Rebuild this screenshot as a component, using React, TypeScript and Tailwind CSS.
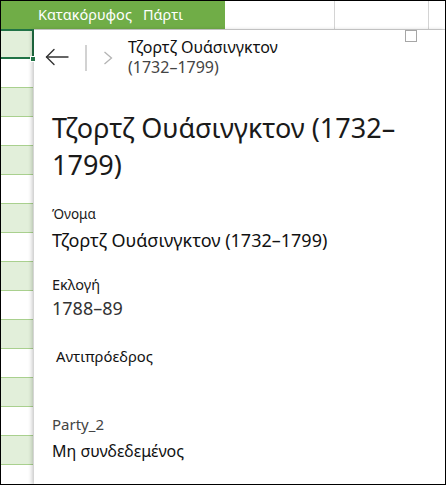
import { useState } from "react";

const FONT = { fontFamily: '"Segoe UI", "Noto Sans", "Open Sans", sans-serif' };

const ROWS = Array.from({ length: 16 }, (_, i) => i);

function BackArrow() {
  return (
    <svg width="24" height="18" viewBox="0 0 24 18" fill="none" stroke="#333" strokeWidth="1.4" strokeLinecap="round">
      <path d="M1.5 9 H23" />
      <path d="M9 1.5 L1.5 9 L9 16.5" strokeLinejoin="round" />
    </svg>
  );
}

function Chevron() {
  return (
    <svg width="10" height="14" viewBox="0 0 10 14" fill="none" stroke="#b4b4b4" strokeWidth="1.3">
      <path d="M1.5 1 L8.5 7 L1.5 13" />
    </svg>
  );
}

function Field({ label, value }: { label: string; value: string }) {
  return (
    <div>
      <div className="text-[13.5px] leading-[18px] text-[#1a1a1a]">{label}</div>
      <div className="mt-[6px] text-[18px] leading-[22px] text-[#111]">{value}</div>
    </div>
  );
}

export default function App() {
  const [checked, setChecked] = useState(false);

  return (
    <div className="relative h-[485px] w-[446px] overflow-hidden border border-black bg-white" style={FONT}>
      {/* sheet header */}
      <div className="flex h-[29px] border-b border-[#d4d4d4]">
        <div className="flex w-[224px] items-center bg-[#70ad47] pl-[37px] text-[14.5px] text-white">
          <span>Κατακόρυφος</span>
          <span className="ml-[11px]">Πάρτι</span>
        </div>
        <div className="w-[110px] border-r border-[#d4d4d4]" />
        <div className="w-[94px] border-r border-[#d4d4d4]" />
        <div className="flex-1" />
      </div>

      <div className="flex h-[455px]">
        {/* banded column */}
        <div className="relative w-[32px] shrink-0">
          {ROWS.map((i) => (
            <div
              key={i}
              className={`h-[29px] border-b border-[#a9d08e] ${i % 2 === 0 ? "bg-[#e2efda]" : "bg-white"}`}
            />
          ))}
          <div className="absolute -top-px left-0 h-[30px] w-[33px] border-2 border-l-0 border-[#217346]" />
        </div>

        {/* card panel */}
        <div className="relative ml-px flex-1 bg-white shadow-[-2px_0_4px_rgba(0,0,0,0.22)]">
          <button
            onClick={() => setChecked(!checked)}
            className="absolute right-[28px] top-0 h-[12px] w-[12px] border border-[#a6a6a6] bg-white"
          />

          <div className="flex items-start pl-[11px] pt-[7px]">
            <div className="flex h-[40px] w-[24px] items-center">
              <BackArrow />
            </div>
            <div className="ml-[16px] mt-[8px] h-[26px] w-[2px] bg-[#d2d2d2]" />
            <div className="ml-[16px] mt-[14px]">
              <Chevron />
            </div>
            <div className="ml-[15px] text-[16px] leading-[20px]">
              <div className="text-[#111]">Τζορτζ Ουάσινγκτον</div>
              <div className="text-[#444]">(1732–1799)</div>
            </div>
          </div>

          <div className="pl-[18px] pr-[20px]">
            <h1 className="mt-[32px] text-[27px] leading-[37px] font-normal text-[#1a1a1a]">
              Τζορτζ Ουάσινγκτον (1732–1799)
            </h1>

            <div className="mt-[22px]">
              <Field label="Όνομα" value="Τζορτζ Ουάσινγκτον (1732–1799)" />
            </div>

            <div className="mt-[23px] text-[14.5px] leading-[20px] text-[#1a1a1a]">Εκλογή</div>
            <div className="mt-[2px] text-[18px] leading-[24px] text-[#333]">1788–89</div>

            <div className="mt-[26px] pl-[4px] text-[14.8px] leading-[20px] text-[#111]">Αντιπρόεδρος</div>

            <div className="mt-[48px] text-[15px] leading-[20px] text-[#444]">Party_2</div>
            <div className="mt-[6px] text-[16px] leading-[22px] text-[#111]">Μη συνδεδεμένος</div>
          </div>
        </div>
      </div>

      {/* fill handle */}
      <div className="absolute left-[29px] top-[55px] h-[6px] w-[6px] border border-white bg-[#217346]" />
    </div>
  );
}
